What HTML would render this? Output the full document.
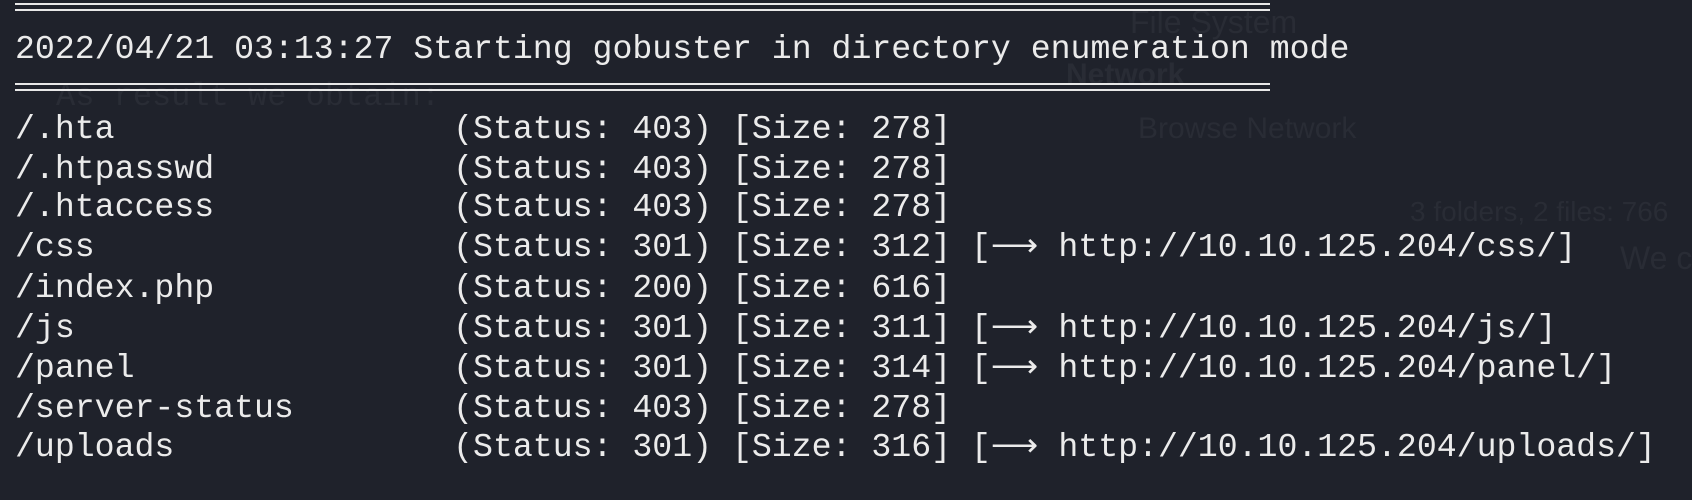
<!DOCTYPE html>
<html><head><meta charset="utf-8"><style>
html,body{margin:0;padding:0;background:#1f222b;width:1692px;height:500px;overflow:hidden}
.l{position:absolute;left:15px;font-family:"Liberation Mono",monospace;font-size:33.2px;line-height:40px;color:#ebebeb;white-space:pre}
.g{position:absolute;font-family:"Liberation Sans",sans-serif;color:#292c35;white-space:pre}
.dl{position:absolute;left:15px;width:1255px;height:2px;background:#e8e8e8}
</style></head><body>
<div class="g" style="left:1130px;top:4px;font-size:32px">File System</div>
<div class="g" style="left:1066px;top:58px;font-size:30px;font-weight:bold">Network</div>
<div class="g" style="left:1138px;top:112px;font-size:30px">Browse Network</div>
<div class="g" style="left:1410px;top:196px;font-size:28px">3 folders, 2 files: 766</div>
<div class="g" style="left:1620px;top:240px;font-size:32px">We can scan h</div>
<div class="g" style="left:56px;top:78px;font-size:32px;font-family:'Liberation Mono',monospace">As result we obtain:</div>
<div class="dl" style="top:3px"></div><div class="dl" style="top:9px"></div>
<div class="l" style="top:29px">2022/04/21 03:13:27 Starting gobuster in directory enumeration mode</div>
<div class="dl" style="top:83px"></div><div class="dl" style="top:89px"></div>
<div class="l" style="top:109px">/.hta                 (Status: 403) [Size: 278]</div>
<div class="l" style="top:149px">/.htpasswd            (Status: 403) [Size: 278]</div>
<div class="l" style="top:187px">/.htaccess            (Status: 403) [Size: 278]</div>
<div class="l" style="top:227px">/css                  (Status: 301) [Size: 312] [⟶ http://10.10.125.204/css/]</div>
<div class="l" style="top:268px">/index.php            (Status: 200) [Size: 616]</div>
<div class="l" style="top:308px">/js                   (Status: 301) [Size: 311] [⟶ http://10.10.125.204/js/]</div>
<div class="l" style="top:348px">/panel                (Status: 301) [Size: 314] [⟶ http://10.10.125.204/panel/]</div>
<div class="l" style="top:388px">/server-status        (Status: 403) [Size: 278]</div>
<div class="l" style="top:427px">/uploads              (Status: 301) [Size: 316] [⟶ http://10.10.125.204/uploads/]</div>
</body></html>
